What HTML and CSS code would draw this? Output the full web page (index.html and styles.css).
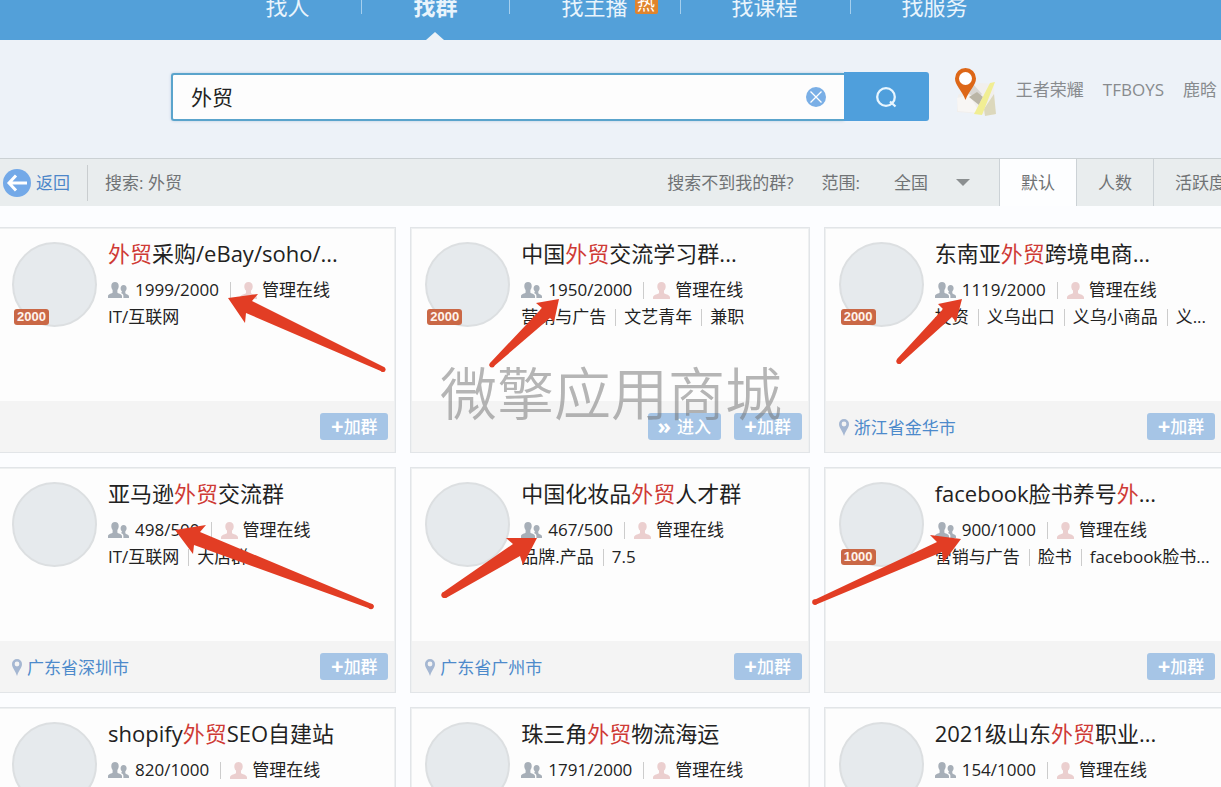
FILE: index.html
```html
<!DOCTYPE html>
<html lang="zh-CN">
<head>
<meta charset="utf-8">
<title>找群</title>
<link rel="stylesheet" href="styles.css">
</head>
<body>
<svg class="defs" aria-hidden="true">
  <symbol id="i-people" viewBox="0 0 21 16"><path d="M7 0c2.300 0 3.700 1.600 3.700 4 0 1.900-.6 3-1.300 3.900v2.600c.3 1.200 4.600 1.200 4.600 3.700V16H0v-1.800c0-2.500 4.300-2.500 4.600-3.700V7.900C3.900 7 3.300 5.900 3.300 4 3.300 1.600 4.700 0 7 0z"/><path d="M15.600 3c2 0 3 1.400 3 3.300 0 1.500-.6 2.400-1.300 3.100v1.800c.3.900 3.700 1.200 3.700 3.300V16h-5.600v-2.300c0-1.400-1.200-2.200-2.400-2.700.7-.4 1-.9.900-1.700-.8-.7-1.300-1.600-1.300-3 0-1.900 1-3.300 3-3.300z"/></symbol>
  <symbol id="i-person" viewBox="0 0 17 17"><path d="M8.500 0c2.600 0 4.200 1.800 4.200 4.400 0 2-.8 3.300-1.700 4.200v2.300c.3 1.400 6 1.400 6 4.600V17H0v-1.500c0-3.200 5.700-3.200 6-4.600V8.600c-.9-.9-1.700-2.200-1.700-4.200C4.300 1.800 5.900 0 8.500 0z"/></symbol>
  <symbol id="i-pin" viewBox="0 0 10 17"><path fill-rule="evenodd" d="M5 0a5 5 0 0 1 5 5c0 3.800-3.300 6.500-5 12C3.300 11.500 0 8.800 0 5a5 5 0 0 1 5-5zm0 2.600a2.400 2.400 0 1 0 0 4.800 2.400 2.400 0 0 0 0-4.800z"/></symbol>
</svg>

<header class="topbar">
  <nav class="nav">
    <a class="nav-item" href="#">找人</a>
    <a class="nav-item active" href="#">找群</a>
    <a class="nav-item" href="#">找主播<span class="hot">热</span></a>
    <a class="nav-item" href="#">找课程</a>
    <a class="nav-item" href="#">找服务</a>
  </nav>
</header>

<section class="search">
  <form class="search-form">
    <div class="field">
      <input type="text" value="外贸" aria-label="搜索">
      <button class="clear" type="button" aria-label="清除"><svg viewBox="0 0 20 20" width="20" height="20"><circle cx="10" cy="10" r="10" fill="#7aafe6"/><path d="M4.500 4.500l11 11M15.500 4.500l-11 11" stroke="#fff" stroke-width="1.300"/></svg></button>
    </div>
    <button class="go" type="submit" aria-label="搜索"><svg viewBox="0 0 22 22" width="22" height="22" fill="none" stroke="#e8f6ff" stroke-width="2.300"><circle cx="11" cy="11" r="8.800"/><path d="M15 15.500l5.500 5"/></svg></button>
  </form>
  <svg class="map" viewBox="0 0 43 50" width="43" height="50" aria-hidden="true">
    <path d="M4 27l22-12 14 1 1 31-38-3z" fill="#f1efed"/>
    <path d="M3 30l12-3 11 18-22-2z" fill="#f8f6f4"/>
    <path d="M13 25l6-9 9 10-5 4z" fill="#d9d7d4"/>
    <path d="M15 29l8-5 6 5-4 8z" fill="#bab5a6"/>
    <path d="M30 41l10-15 2 20-11 2z" fill="#dcd8bc"/>
    <path d="M36 15l5-1-13 33-8-1z" fill="#f1ee93"/>
    <path fill="#dd6718" fill-rule="evenodd" d="M11.500 0a10.500 10.500 0 0 1 10.500 10.500c0 7-6.500 11-10.500 21.500C7.500 21.500 1 17.500 1 10.500A10.500 10.500 0 0 1 11.500 0z"/>
    <circle cx="11.500" cy="10.500" r="6.500" fill="#fff"/>
  </svg>
  <div class="hot-words"><a href="#">王者荣耀</a><a href="#">TFBOYS</a><a href="#">鹿晗</a></div>
</section>

<section class="toolbar">
  <a class="back" href="#"><svg viewBox="0 0 28 28" width="28" height="28"><circle cx="14" cy="14" r="14" fill="#73a9e8"/><path d="M24 14H7M13 6.500L6 14l7 7.500" fill="none" stroke="#fff" stroke-width="3"/></svg>返回</a>
  <span class="crumb">搜索: 外贸</span>
  <a class="help" href="#">搜索不到我的群?</a>
  <label class="range" for="area">范围:</label>
  <div class="area"><select id="area"><option>全国</option></select><svg viewBox="0 0 14 7" width="14" height="7"><path d="M0 0h14L7 7z" fill="#8b8f90"/></svg></div>
  <div class="tabs">
    <button type="button" class="tab on">默认</button>
    <button type="button" class="tab">人数</button>
    <button type="button" class="tab last">活跃度</button>
  </div>
</section>

<main class="results">
  <div class="grid">
    <article class="card">
      <div class="body"><div class="avatar"><span class="cap">2000</span></div>
        <div class="info">
          <h3><em>外贸</em>采购/eBay/soho/...</h3>
          <p class="meta"><svg class="people"><use href="#i-people"/></svg><span>1999/2000</span><i></i><svg class="person"><use href="#i-person"/></svg><span>管理在线</span></p>
          <p class="tags"><span>IT/互联网</span></p>
        </div></div>
      <footer><button type="button" class="btn"><b>+</b>加群</button></footer>
    </article>
    <article class="card">
      <div class="body"><div class="avatar"><span class="cap">2000</span></div>
        <div class="info">
          <h3>中国<em>外贸</em>交流学习群...</h3>
          <p class="meta"><svg class="people"><use href="#i-people"/></svg><span>1950/2000</span><i></i><svg class="person"><use href="#i-person"/></svg><span>管理在线</span></p>
          <p class="tags"><span>营销与广告</span><span>文艺青年</span><span>兼职</span></p>
        </div></div>
      <footer><button type="button" class="btn enter"><b>»</b>进入</button><button type="button" class="btn"><b>+</b>加群</button></footer>
    </article>
    <article class="card">
      <div class="body"><div class="avatar"><span class="cap">2000</span></div>
        <div class="info">
          <h3>东南亚<em>外贸</em>跨境电商...</h3>
          <p class="meta"><svg class="people"><use href="#i-people"/></svg><span>1119/2000</span><i></i><svg class="person"><use href="#i-person"/></svg><span>管理在线</span></p>
          <p class="tags"><span>投资</span><span>义乌出口</span><span>义乌小商品</span><span>义...</span></p>
        </div></div>
      <footer><a class="place" href="#"><svg><use href="#i-pin"/></svg>浙江省金华市</a><button type="button" class="btn"><b>+</b>加群</button></footer>
    </article>
    <article class="card">
      <div class="body"><div class="avatar"></div>
        <div class="info">
          <h3>亚马逊<em>外贸</em>交流群</h3>
          <p class="meta"><svg class="people"><use href="#i-people"/></svg><span>498/500</span><i></i><svg class="person"><use href="#i-person"/></svg><span>管理在线</span></p>
          <p class="tags"><span>IT/互联网</span><span>大店群</span></p>
        </div></div>
      <footer><a class="place" href="#"><svg><use href="#i-pin"/></svg>广东省深圳市</a><button type="button" class="btn"><b>+</b>加群</button></footer>
    </article>
    <article class="card">
      <div class="body"><div class="avatar"></div>
        <div class="info">
          <h3>中国化妆品<em>外贸</em>人才群</h3>
          <p class="meta"><svg class="people"><use href="#i-people"/></svg><span>467/500</span><i></i><svg class="person"><use href="#i-person"/></svg><span>管理在线</span></p>
          <p class="tags"><span>品牌.产品</span><span>7.5</span></p>
        </div></div>
      <footer><a class="place" href="#"><svg><use href="#i-pin"/></svg>广东省广州市</a><button type="button" class="btn"><b>+</b>加群</button></footer>
    </article>
    <article class="card">
      <div class="body"><div class="avatar"><span class="cap">1000</span></div>
        <div class="info">
          <h3>facebook脸书养号<em>外</em>...</h3>
          <p class="meta"><svg class="people"><use href="#i-people"/></svg><span>900/1000</span><i></i><svg class="person"><use href="#i-person"/></svg><span>管理在线</span></p>
          <p class="tags"><span>营销与广告</span><span>脸书</span><span>facebook脸书...</span></p>
        </div></div>
      <footer><button type="button" class="btn"><b>+</b>加群</button></footer>
    </article>
    <article class="card">
      <div class="body"><div class="avatar"></div>
        <div class="info">
          <h3>shopify<em>外贸</em>SEO自建站</h3>
          <p class="meta"><svg class="people"><use href="#i-people"/></svg><span>820/1000</span><i></i><svg class="person"><use href="#i-person"/></svg><span>管理在线</span></p>
        </div></div>
    </article>
    <article class="card">
      <div class="body"><div class="avatar"></div>
        <div class="info">
          <h3>珠三角<em>外贸</em>物流海运</h3>
          <p class="meta"><svg class="people"><use href="#i-people"/></svg><span>1791/2000</span><i></i><svg class="person"><use href="#i-person"/></svg><span>管理在线</span></p>
        </div></div>
    </article>
    <article class="card">
      <div class="body"><div class="avatar"></div>
        <div class="info">
          <h3>2021级山东<em>外贸</em>职业...</h3>
          <p class="meta"><svg class="people"><use href="#i-people"/></svg><span>154/1000</span><i></i><svg class="person"><use href="#i-person"/></svg><span>管理在线</span></p>
        </div></div>
    </article>
  </div>
</main>

<div class="watermark">微擎应用商城</div>
<svg class="arrows" width="1221" height="787" viewBox="0 0 1221 787" fill="#e23d24" aria-hidden="true">
  <path d="M228 298L258 294L252 301L384 367Q387 370 383 372L246 313L245 323z"/>
  <path d="M559 299L536 303L542 308L490 363Q488 367 493 367L550 318L554 322z"/>
  <path d="M962 299L938 304L943 309L897 359Q895 363 900 364L952 317L956 322z"/>
  <path d="M175 530L206 525L200 532L372 604Q376 607 371 609L194 545L193 554z"/>
  <path d="M537 538L506 538L513 544L442 593Q440 598 446 598L520 556L523 565z"/>
  <path d="M961 539L930 535L937 542L814 600Q811 604 815 605L942 552L943 563z"/>
  <circle cx="383" cy="369.500" r="2.500"/>
  <circle cx="492" cy="365" r="2.500"/>
  <circle cx="899" cy="361.500" r="2.500"/>
  <circle cx="371" cy="606.500" r="2.700"/>
  <circle cx="444.500" cy="595" r="3"/>
  <circle cx="815" cy="602" r="2.800"/>
</svg>
</body>
</html>
```

FILE: styles.css
```css
* { box-sizing: border-box; }
html, body { height: 100%; }
body {
  margin: 0;
  overflow: hidden;
  position: relative;
  background: #fcfdff;
  color: #222;
  font: 17px/24px "Open Sans", "Noto Sans", "Noto Sans CJK SC", sans-serif;
}
a { color: inherit; text-decoration: none; }
button, input, select { font: inherit; color: inherit; border: 0; margin: 0; padding: 0; background: none; }
h3, p { margin: 0; }
svg { flex: none; display: block; }
.defs { position: absolute; width: 0; height: 0; }

.topbar { background: #53a0d9; overflow: hidden; }
.nav {
  display: flex;
  justify-content: center;
  margin-top: -28px;
  padding-left: 12px;
  font-size: 22px;
  line-height: 68px;
  color: #e9f4fc;
}
.nav-item { position: relative; padding: 0 52px; }
.nav-item + .nav-item::before {
  content: "";
  position: absolute;
  left: 0;
  top: 26px;
  width: 1px;
  height: 16px;
  background: #a5cfee;
}
.nav-item.active { font-weight: 700; }
.nav-item.active::after {
  content: "";
  position: absolute;
  left: 50%;
  bottom: 0;
  margin-left: -9px;
  border: 9px solid transparent;
  border-top: 0;
  border-bottom: 8px solid #eef3f7;
}
.hot {
  position: absolute;
  right: 22px;
  top: 22px;
  width: 23px;
  height: 20px;
  border-radius: 2px;
  background: #e0842c;
  color: #fff;
  font-size: 18px;
  line-height: 19px;
  text-align: center;
}

.search {
  display: flex;
  align-items: flex-start;
  padding: 32px 4px 37px 171px;
  background: #edf2f8;
}
.search-form { flex: 1; display: flex; height: 49px; }
.field {
  flex: 1;
  display: flex;
  align-items: center;
  margin-top: 1px;
  padding: 0 18px;
  border: 2px solid #5aa4cc;
  border-right: 0;
  border-radius: 3px 0 0 3px;
  background: #fdfdfd;
  box-shadow: 0 0 3px #b9cbe0;
}
.field input { flex: 1; min-width: 0; font-size: 21px; outline: 0; }
.go {
  display: grid;
  place-items: center;
  width: 85px;
  border-radius: 0 3px 3px 0;
  background: #4f9fdc;
}
.map { margin: -4px 19px 0 25px; }
.hot-words { display: flex; gap: 19px; padding-top: 6px; color: #888b8e; }

.toolbar {
  display: flex;
  align-items: center;
  height: 48px;
  border-top: 1px solid #cbd1d4;
  background: #e9edee;
  color: #707375;
  white-space: nowrap;
}
.back { display: flex; align-items: center; gap: 5px; padding: 0 17px 0 3px; line-height: 36px; border-right: 1px solid #c9cdcf; color: #4d87c9; }
.crumb { padding-left: 17px; }
.help { margin-left: auto; }
.range { margin: 0 34px 0 28px; }
.area { display: flex; align-items: center; width: 105px; }
.area select { appearance: none; width: 62px; outline: 0; }
.tabs { display: flex; align-self: stretch; }
.tab { width: 77px; border-left: 1px solid #ccd2d6; }
.tab.on { background: #fdfeff; }
.tab.last { width: 68px; padding-left: 21px; overflow: hidden; text-align: left; }

.results { overflow: hidden; padding-top: 21px; }
.grid { display: grid; grid-template-columns: repeat(3, minmax(0, 1fr)); gap: 14px; margin: 0 -2px 0 -3px; }
.card {
  display: flex;
  flex-direction: column;
  min-height: 226px;
  border: 1px solid #e2e5e8;
  box-shadow: inset 0 0 0 1px #eef0f1;
  background: #fdfdfd;
}
.body { display: flex; flex: 1; gap: 11px; padding: 14px 0 0 14px; }
.avatar {
  position: relative;
  flex: none;
  width: 85px;
  height: 85px;
  border: 2px solid #dcdfe1;
  border-radius: 50%;
  background: #e6eaed;
}
.cap {
  position: absolute;
  left: 0;
  bottom: 0;
  padding: 0 3px;
  border-radius: 3px;
  background: #ca6846;
  color: #fff3ec;
  font: 700 13px/16px "Liberation Sans", sans-serif;
}
.info { min-width: 0; white-space: nowrap; }
h3 { font-size: 22px; font-weight: 400; line-height: 22px; }
h3 em { font-style: normal; color: #cf3a35; }
.meta { display: flex; align-items: center; height: 28px; margin-top: 12px; }
.meta i { width: 1px; height: 17px; margin: 0 9px 0 11px; background: #ccc; }
.people { width: 21px; height: 16px; margin-right: 6px; fill: #a7afb8; }
.person { width: 17px; height: 17px; margin-right: 5px; fill: #ebcfcf; }
.tags { display: flex; align-items: center; height: 26px; }
.tags span + span::before {
  content: "";
  display: inline-block;
  width: 1px;
  height: 17px;
  margin: 0 8px 0 9px;
  vertical-align: -3px;
  background: #ccc;
}
.card footer {
  display: flex;
  align-items: center;
  gap: 13px;
  height: 51px;
  margin: 0 1px;
  padding: 0 6px 0 13px;
  background: #f4f4f4;
}
.place { display: flex; align-items: center; gap: 5px; padding-top: 2px; color: #4d8acb; }
.place svg { width: 10px; height: 17px; fill: #a5b7d2; }
.btn {
  display: flex;
  align-items: center;
  justify-content: center;
  width: 68px;
  height: 27px;
  border-radius: 3px;
  background: #a6c5e6;
  color: #fff;
  font-weight: 500;
}
.btn:first-child, .place + .btn { margin-left: auto; }
.btn b { padding-bottom: 4px; font-size: 22px; }
.btn.enter { width: 73px; gap: 6px; }

.watermark {
  position: absolute;
  left: 440px;
  top: 356px;
  color: rgba(115, 115, 115, .52);
  font: 350 57px/68px "Noto Sans CJK SC", sans-serif;
  white-space: nowrap;
  pointer-events: none;
}
.arrows { position: absolute; left: 0; top: 0; pointer-events: none; }
```
